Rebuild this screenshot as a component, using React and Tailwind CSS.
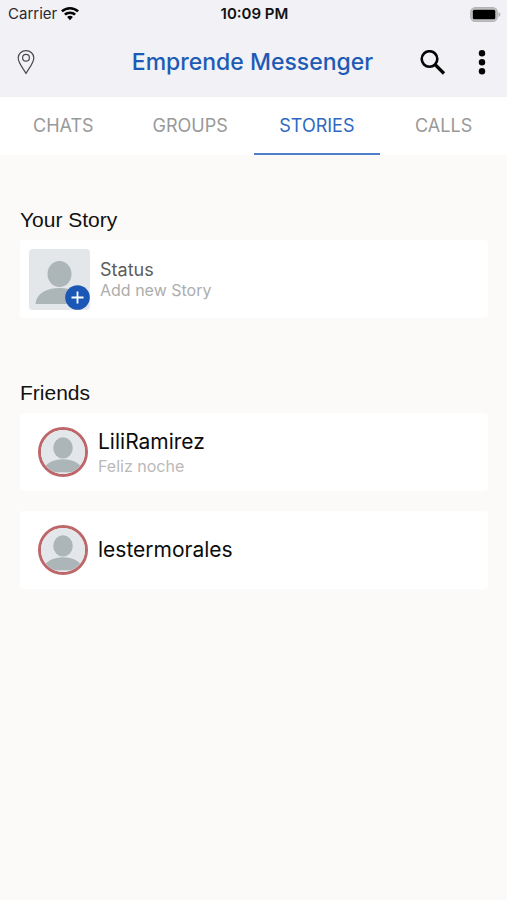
import { useState } from "react";

const tabs = ["CHATS", "GROUPS", "STORIES", "CALLS"];

const friends = [
  { name: "LiliRamirez", caption: "Feliz noche" },
  { name: "lestermorales", caption: "" },
];

const WifiIcon = () => (
  <svg width="18" height="14" viewBox="0 0 18 14" fill="#050505" aria-hidden="true">
    <path d="M9 0C5.600 0 2.500 1.300 0 3.500L1.800 5.300A10.500 10.500 0 0 1 16.200 5.300L18 3.500C15.500 1.300 12.400 0 9 0Z" />
    <path d="M9 4.500C6.700 4.500 4.600 5.400 3 6.800L4.800 8.600A6.200 6.200 0 0 1 13.200 8.600L15 6.800C13.400 5.400 11.300 4.500 9 4.500Z" />
    <path d="M9 8.800C7.900 8.800 6.900 9.200 6.100 10L9 13.300L11.900 10C11.100 9.200 10.100 8.800 9 8.800Z" />
  </svg>
);

const BatteryIcon = () => (
  <svg width="31" height="15" viewBox="0 0 31 15" aria-hidden="true">
    <rect x="0.800" y="0.800" width="26.400" height="13.400" rx="4.500" fill="#c9c9cb" stroke="#b4b4b7" strokeWidth="1.400" />
    <rect x="2.800" y="2.800" width="22.500" height="9.400" rx="1.500" fill="#000" />
    <path d="M28.500 5V10C31 9.300 31 5.700 28.500 5Z" fill="#b4b4b7" />
  </svg>
);

const PinIcon = () => (
  <svg width="18" height="26" viewBox="0 0 18 26" fill="none" stroke="#4a4a4c" strokeWidth="1.200" aria-hidden="true">
    <path d="M9 23.500C6.800 19 1.200 13.500 1.200 7.800C1.200 3.800 4.600 0.600 9 0.600C13.400 0.600 16.800 3.800 16.800 7.800C16.800 13.500 11.200 19 9 23.500Z" strokeLinejoin="round" />
    <circle cx="9" cy="7.800" r="3.400" />
  </svg>
);

const SearchIcon = () => (
  <svg width="26" height="26" viewBox="0 0 26 26" fill="none" stroke="#050505" aria-hidden="true">
    <circle cx="9.500" cy="9" r="7.800" strokeWidth="2.600" />
    <path d="M15 14.500L24 23.500" strokeWidth="3.200" />
  </svg>
);

const MoreIcon = () => (
  <svg width="8" height="26" viewBox="0 0 8 26" fill="#050505" aria-hidden="true">
    <circle cx="4" cy="3.200" r="3.200" />
    <circle cx="4" cy="12.200" r="3.200" />
    <circle cx="4" cy="21.200" r="3.200" />
  </svg>
);

// Grey placeholder used when a user has no photo
const Silhouette = ({ viewBox = "0 0 61 61" }) => (
  <svg className="block h-full w-full" viewBox={viewBox} aria-hidden="true">
    <rect width="61" height="61" fill="#e3e7e9" />
    <ellipse cx="30.500" cy="25" rx="12" ry="13" fill="#acb5b8" />
    <path d="M6.500 55C7 45 17 39 30.500 39C44 39 54 45 54.500 55Z" fill="#acb5b8" />
  </svg>
);

const StatusBar = () => (
  <div className="grid h-7 grid-cols-3 items-center pl-2 pr-1.5 text-[15px] text-[#2a2a2c]">
    <div className="flex items-center gap-1">
      <span>Carrier</span>
      <WifiIcon />
    </div>
    <span className="text-center font-semibold whitespace-nowrap text-[#111]">10:09 PM</span>
    <div className="flex justify-end">
      <BatteryIcon />
    </div>
  </div>
);

const FriendCard = ({ friend }) => (
  <li className="flex h-[78px] items-center gap-2.5 rounded bg-white pl-[18px]">
    <div className="h-[50px] w-[50px] shrink-0 overflow-hidden rounded-full border-[3px] border-[#bd676a]">
      <Silhouette viewBox="3.500 3 54 54" />
    </div>
    <div>
      <p className="text-[21px] leading-7 text-[#0c0c0c]">{friend.name}</p>
      {friend.caption && (
        <p className="text-base leading-5 text-[#b9b9b9]">{friend.caption}</p>
      )}
    </div>
  </li>
);

const App = () => {
  const [active, setActive] = useState("STORIES");

  return (
    <div className="min-h-screen bg-[#fbfaf8] font-['Inter',sans-serif]">
      <header className="bg-[#f1f1f6]">
        <StatusBar />
        <div className="flex h-[69px] items-center justify-between pr-[21px] pl-[17px]">
          <button type="button" aria-label="Location" className="flex w-[70px]">
            <PinIcon />
          </button>
          <h1 className="text-[23px] font-medium whitespace-nowrap text-[#1d5bb5]">
            Emprende Messenger
          </h1>
          <div className="flex w-[68px] justify-end gap-8">
            <button type="button" aria-label="Search">
              <SearchIcon />
            </button>
            <button type="button" aria-label="More options">
              <MoreIcon />
            </button>
          </div>
        </div>
      </header>

      <nav className="grid grid-cols-4 bg-white">
        {tabs.map((tab) => (
          <button
            key={tab}
            type="button"
            onClick={() => setActive(tab)}
            className={`h-[58px] border-b-2 pt-0.5 text-lg ${
              tab === active
                ? "border-[#4f7fcb] text-[#2f68c0]"
                : "border-transparent text-[#999]"
            }`}
          >
            {tab}
          </button>
        ))}
      </nav>

      <main className="pt-[51px] pr-[19px] pl-5">
        <section>
          <h2 className="pb-1.5 font-['Liberation_Sans',sans-serif] text-[21px] leading-7 text-[#111]">
            Your Story
          </h2>
          <button
            type="button"
            className="flex h-[78px] w-full items-center gap-2.5 rounded bg-white pl-[9px] text-left"
          >
            <span className="relative h-[61px] w-[61px] shrink-0">
              <span className="block h-full w-full overflow-hidden rounded">
                <Silhouette />
              </span>
              {/* Add badge */}
              <svg className="absolute right-0 bottom-0" width="25" height="25" viewBox="0 0 25 25" aria-hidden="true">
                <circle cx="12.500" cy="12.500" r="12.300" fill="#1b57b5" />
                <path d="M12.500 6.500V18.500M6.500 12.500H18.500" stroke="#fff" strokeWidth="1.800" />
              </svg>
            </span>
            <span className="pt-0.5">
              <span className="block text-lg leading-5 text-[#5c5c5c]">Status</span>
              <span className="block text-base leading-5 text-[#adadad]">Add new Story</span>
            </span>
          </button>
        </section>

        <section className="pt-[61px]">
          <h2 className="pb-1.5 font-['Liberation_Sans',sans-serif] text-[21px] leading-7 text-[#111]">
            Friends
          </h2>
          <ul className="flex flex-col gap-5">
            {friends.map((friend) => (
              <FriendCard key={friend.name} friend={friend} />
            ))}
          </ul>
        </section>
      </main>
    </div>
  );
};

export default App;
